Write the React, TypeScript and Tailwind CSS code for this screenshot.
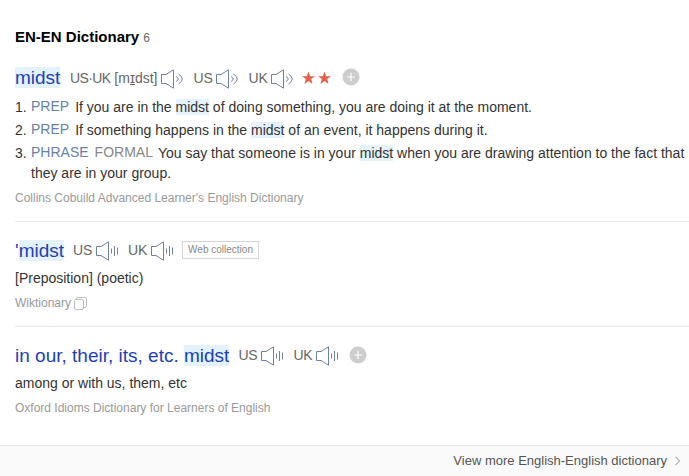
import type { ReactNode } from "react";

function Mark({ children }: { children: ReactNode }) {
  return <span className="bg-[#e3f2fd]">{children}</span>;
}

function Speaker({ bars = false }: { bars?: boolean }) {
  return (
    <svg width="24" height="22" viewBox="0 0 24 22" fill="none" stroke="#6f81a3" strokeWidth="1" className="ml-[3px] shrink-0 translate-y-px">
      <path d="M1.5 6.5H6L13.5 1.8V20.2L6 15.5H1.5Z" />
      {bars ? (
        <path d="M16.5 8.5V13.5M19.5 6V16M22.5 7.5V14.5" />
      ) : (
        <path d="M16 8.5Q20.5 11 16 13.5M18.5 6Q26 11 18.5 16" />
      )}
    </svg>
  );
}

function Star() {
  return (
    <svg width="15" height="14" viewBox="0 0 15 14" fill="#e8604c">
      <path d="M7.5 0.5L9.2 5.2H14L10.1 8.1L11.5 13L7.5 10.1L3.5 13L4.9 8.1L1 5.2H5.8Z" />
    </svg>
  );
}

function Plus() {
  return (
    <svg width="18" height="18" viewBox="0 0 18 18" fill="none" className="ml-[10px]">
      <circle cx="9" cy="9" r="8.5" fill="#cdcdcd" />
      <path d="M9 5V13M5 9H13" stroke="#fff" strokeWidth="1.2" />
    </svg>
  );
}

function Accent({ label, bars }: { label: string; bars?: boolean }) {
  return (
    <span className="ml-[9px] flex items-center">
      <span className="w-[19px] tracking-[-0.2px]">{label}</span>
      <Speaker bars={bars} />
    </span>
  );
}

function Head({ word, children }: { word: ReactNode; children: ReactNode }) {
  return (
    <div className="flex h-[24px] items-center whitespace-pre text-[14px] text-[#666]">
      <h2 className="text-[19px] leading-[21px] text-[#1e3fb4]">{word}</h2>
      {children}
    </div>
  );
}

function Sense({ n, tag, register, children }: { n: number; tag: string; register?: string; children: ReactNode }) {
  return (
    <li className="flex">
      <span className="w-[16px] shrink-0">{n}.</span>
      <p className="whitespace-nowrap">
        <span className="mr-[6px] inline-block -translate-y-px text-[#6781a6]">{tag}</span>
        {register && <span className="mr-[5px] inline-block -translate-y-px text-[#888]">{register}</span>}
        {children}
      </p>
    </li>
  );
}

export default function App() {
  return (
    <main className="flex h-[476px] w-[689px] flex-col overflow-hidden bg-white font-['Liberation_Sans',Arial,sans-serif] text-[14px] leading-[20px] text-[#333]">
      <h1 className="mt-[27px] ml-[15px] h-[20px] text-[15px] font-bold text-black">
        EN-EN Dictionary <span className="text-[12px] font-normal text-[#666]">6</span>
      </h1>

      <section className="ml-[15px] h-[175px] border-b border-[#ebebeb] pt-[18px]">
        <Head word={<Mark>midst</Mark>}>
          <span className="flex translate-y-px items-center">
            <span className="ml-[9.5px] flex items-center">
              <span><span className="tracking-[-0.6px]">US·UK</span> [m<u className="underline-offset-1">ɪ</u>dst]</span>
              <Speaker />
            </span>
            <Accent label="US" />
            <Accent label="UK" />
            <span className="ml-[7px] flex gap-px"><Star /><Star /></span>
          </span>
          <Plus />
        </Head>
        <ol className="mt-[8px] flex flex-col gap-[3px]">
          <Sense n={1} tag="PREP">If you are in the <Mark>midst</Mark> of doing something, you are doing it at the moment.</Sense>
          <Sense n={2} tag="PREP">If something happens in the <Mark>midst</Mark> of an event, it happens during it.</Sense>
          <Sense n={3} tag="PHRASE" register="FORMAL">
            You say that someone is in your <Mark>midst</Mark> when you are drawing attention to the fact that
            <br />
            they are in your group.
          </Sense>
        </ol>
        <p className="mt-[5px] text-[12px] text-[#999]">Collins Cobuild Advanced Learner's English Dictionary</p>
      </section>

      <section className="ml-[15px] h-[105px] border-b border-[#ebebeb] pt-[16px]">
        <Head word={<>'<Mark>midst</Mark></>}>
          <Accent label="US" bars />
          <Accent label="UK" bars />
          <span className="ml-[8px] h-[18px] w-[77px] border border-[#d5d5d5] text-center text-[10px] leading-[16px] text-[#888]">Web collection</span>
        </Head>
        <p className="mt-[6px]">[Preposition] (poetic)</p>
        <p className="mt-[5px] flex items-center text-[12px] text-[#999]">
          Wiktionary
          <svg width="13" height="13" viewBox="0 0 13 13" fill="none" stroke="#bbb" className="ml-[3px]">
            <rect x="0.5" y="2.5" width="9" height="10" rx="1.5" />
            <path d="M2.5 2.5V2Q2.5 .5 4 .5H10.5Q12.5 .5 12.5 2V8.5Q12.5 10.5 11 10.5H9.5" />
          </svg>
        </p>
      </section>

      <section className="ml-[15px] h-[118px] pt-[16px]">
        <Head word={<>in our, their, its, etc. <Mark>midst</Mark></>}>
          <Accent label="US" bars />
          <Accent label="UK" bars />
          <Plus />
        </Head>
        <p className="mt-[6px]">among or with us, them, etc</p>
        <p className="mt-[5px] text-[12px] text-[#999]">Oxford Idioms Dictionary for Learners of English</p>
      </section>

      <footer className="flex h-[31px] items-center justify-end border-t border-[#ebebeb] bg-[#fafafa] pr-[8px] text-[13px] text-[#555]">
        <a>View more English-English dictionary</a>
        <svg width="7" height="10" viewBox="0 0 7 10" fill="none" stroke="#888" className="ml-[7px]">
          <path d="M1.5 .8L5.5 5L1.5 9.2" />
        </svg>
      </footer>
    </main>
  );
}
